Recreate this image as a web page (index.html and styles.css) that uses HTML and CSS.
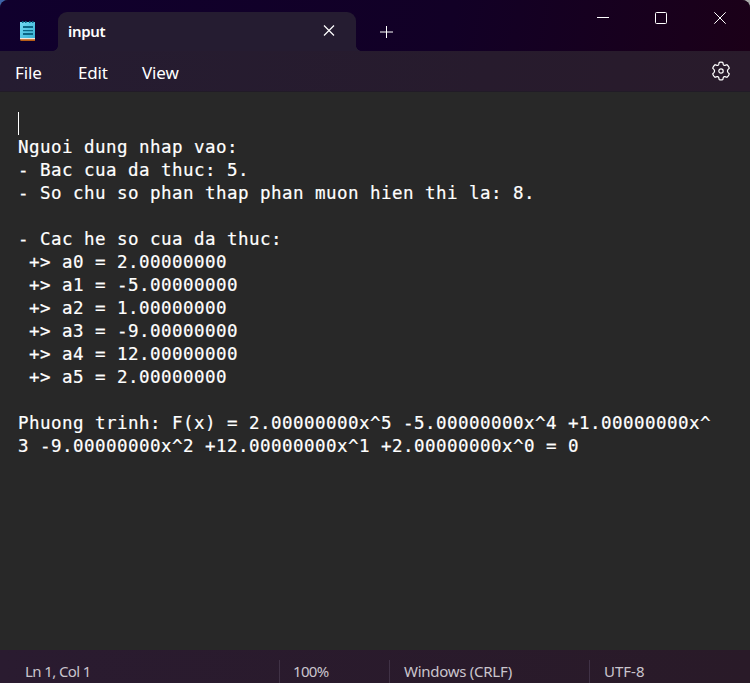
FILE: index.html
```html
<!DOCTYPE html>
<html lang="vi">
<head>
<meta charset="utf-8">
<title>input</title>
<link rel="stylesheet" href="styles.css">
</head>
<body>
<div class="window">
  <header class="titlebar">
    <div class="app">
      <svg width="16" height="21" viewBox="0 0 16 21">
        <defs><linearGradient id="pad" x1="0" y1="0" x2="1" y2="1"><stop offset="0" stop-color="#73dcf4"/><stop offset="1" stop-color="#38afd3"/></linearGradient></defs>
        <path fill="#b65c16" d="M0 17h15v3H.5z"/>
        <path fill="#f3e6dc" d="M0 16h15v2.200H0z"/>
        <path fill="url(#pad)" d="M0 1h15v16H0z"/>
        <path fill="#0b6685" d="M2 0h1.500v2H2zM5 0h1.500v2H5zM9 0h1.500v2H9zM12 0h1.500v2H12zM3 5h10v2H3zM3 9h10v1.300H3zM3 12h10v2H3z"/>
      </svg>
    </div>
    <div class="tab">
      <span class="tab-name">input</span>
      <svg class="tab-close" width="12" height="12" viewBox="0 0 12 12"><path d="M1 .5l10 10M11 .5L1 10.500"/></svg>
    </div>
    <svg class="new-tab" width="14" height="14" viewBox="0 0 14 14"><path d="M6.500 1v12M0 7h13"/></svg>
    <div class="controls">
      <svg width="12" height="14" viewBox="0 0 12 14"><path d="M0 6.500h12"/></svg>
      <svg width="12" height="14" viewBox="0 0 12 14"><rect x=".5" y="1.500" width="11" height="11" rx="1"/></svg>
      <svg width="12" height="14" viewBox="0 0 12 14"><path d="M.3 1.300l11.400 11.400M11.700 1.300L.3 12.700"/></svg>
    </div>
  </header>
  <nav class="menu">
    <span class="file">File</span><span class="edit">Edit</span><span class="view">View</span>
    <svg class="gear" width="20" height="20" viewBox="0 0 20 20"><path d="M8.200 1.400Q10 1 11.800 1.400L12.300 3.500Q12.800 4.600 14 4.300L16 3.700Q17.800 5.200 18.300 7.200L16.900 8.700Q15.900 10 16.900 11.300L18.300 12.800Q17.800 14.800 16 16.300L14 15.700Q12.800 15.400 12.300 16.500L11.800 18.600Q10 19 8.200 18.600L7.700 16.500Q7.200 15.400 6 15.700L4 16.300Q2.200 14.800 1.700 12.800L3.100 11.300Q4.100 10 3.100 8.700L1.700 7.200Q2.200 5.200 4 3.700L6 4.300Q7.200 4.600 7.700 3.500Z"/><circle cx="10" cy="10" r="2.200"/></svg>
  </nav>
  <main class="editor"><div class="caret"></div><pre class="text">Nguoi dung nhap vao:
- Bac cua da thuc: 5.
- So chu so phan thap phan muon hien thi la: 8.

- Cac he so cua da thuc:
 +&gt; a0 = 2.00000000
 +&gt; a1 = -5.00000000
 +&gt; a2 = 1.00000000
 +&gt; a3 = -9.00000000
 +&gt; a4 = 12.00000000
 +&gt; a5 = 2.00000000

Phuong trinh: F(x) = 2.00000000x^5 -5.00000000x^4 +1.00000000x^
3 -9.00000000x^2 +12.00000000x^1 +2.00000000x^0 = 0</pre></main>
  <footer class="status">
    <span class="pos">Ln 1, Col 1</span><span class="zoom">100%</span><span class="eol">Windows (CRLF)</span><span class="enc">UTF-8</span>
  </footer>
</div>
</body>
</html>
```
FILE: styles.css
```css
* { box-sizing: border-box; }
body { margin: 0; background: linear-gradient(90deg, #3d63a8 50%, #aaa 50%); font-family: "Noto Sans", sans-serif; color: #fff; }
svg { display: block; fill: none; stroke: #fff; stroke-width: 1; }
.window { width: 750px; height: 683px; display: flex; flex-direction: column; overflow: hidden; border-radius: 8px 8px 0 0; background: #282828; }
.titlebar { height: 51px; display: flex; background: linear-gradient(100deg, #10002d, #120026 60%, #1b0018); }
.app { width: 58px; padding: 21px 0 0 20px; }
.app svg { stroke: none; }
.tab { position: relative; width: 298px; height: 39px; margin-top: 12px; padding: 0 21px 2px 10px; display: flex; align-items: center; justify-content: space-between; border-radius: 9px 9px 0 0; background: #251c31; }
.tab::before, .tab::after { content: ""; position: absolute; bottom: 0; width: 5px; height: 5px; }
.tab::before { left: -5px; background: radial-gradient(circle at 0 0, transparent 4.500px, #251c31 5px); }
.tab::after { right: -5px; background: radial-gradient(circle at 100% 0, transparent 4.500px, #251c31 5px); }
.tab-name { font-size: 15px; font-weight: 600; letter-spacing: -.3px; }
.tab-close { stroke-width: 1.200; }
.new-tab { margin: 25px 0 0 24px; }
.controls { display: flex; gap: 47px; margin: 11px 24px 0 auto; }
.controls svg:first-child { margin-right: -1px; }
.menu { height: 41px; display: flex; align-items: center; padding: 2px 19px 0 15px; font-size: 17px; letter-spacing: -.15px; background: linear-gradient(100deg, #251c31, #271b2d 65%, #291b2b); border-bottom: 1px solid #211b27; }
.menu .file { width: 63px; }
.menu .edit { width: 64px; }
.gear { margin: -3px 0 0 auto; stroke-width: 1.200; }
.editor { flex: 1; padding: 20px 18px 0; background: #282828; }
.caret { width: 1px; height: 23px; background: #fff; }
.text { margin: 1px 0 0; font: 17.500px/23px "DejaVu Sans Mono", monospace; letter-spacing: .465px; -webkit-text-stroke: .2px #fff; }
.status { height: 33px; display: flex; padding: 10px 0 0 25px; font-size: 15px; line-height: 22px; color: #cac5cd; background: linear-gradient(90deg, #2a1b30, #291a28); }
.status .pos { width: 254px; letter-spacing: -.6px; }
.status span + span { padding-left: 14px; border-left: 1px solid #403246; }
.status .zoom { width: 110px; padding-left: 13px; letter-spacing: -.7px; }
.status .eol { width: 200px; letter-spacing: -.27px; }
```
